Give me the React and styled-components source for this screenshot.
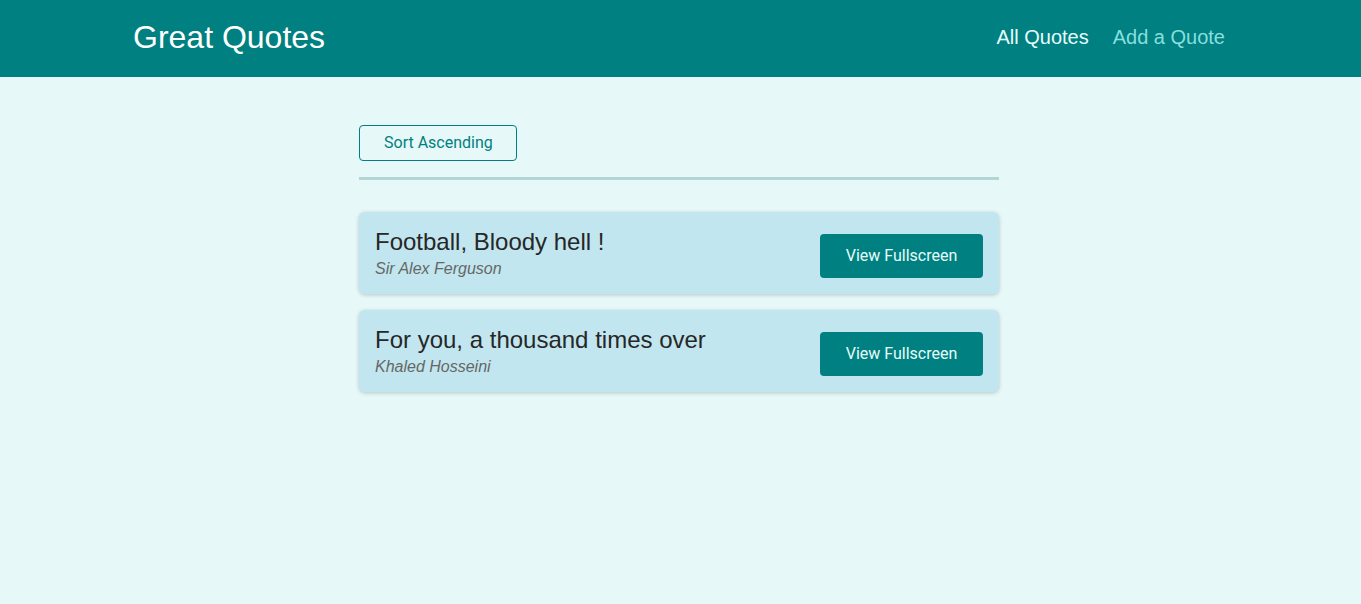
import React from "react";
import styled, { createGlobalStyle } from "styled-components";

const Global = createGlobalStyle`
  * { box-sizing: border-box; }
  html, body { margin: 0; padding: 0; }
  body {
    font-family: "Liberation Sans", Arial, sans-serif;
    background: #e6f8f8;
    min-height: 604px;
  }
`;

const Header = styled.header`
  height: 77px;
  background: #008080;
  display: flex;
  align-items: center;
  justify-content: space-between;
  padding: 0 136px 2px 133px;
`;

const Logo = styled.div`
  color: #ffffff;
  font-size: 32px;
`;

const Nav = styled.nav`
  display: flex;
  gap: 24px;
`;

const NavLink = styled.a`
  font-size: 20px;
  text-decoration: none;
  color: ${(p) => (p.$active ? "#e6fcfc" : "#88dfdf")};
  cursor: pointer;
`;

const Main = styled.main`
  width: 640px;
  margin: 48px 0 0 calc(50% - 321.5px);
`;

const Sorting = styled.div`
  padding-bottom: 16px;
  border-bottom: 3px solid #b3d5d5;
  margin-bottom: 32px;
`;

const OutlineButton = styled.button`
  font-family: Roboto, "Liberation Sans", sans-serif;
  font-size: 16px;
  height: 36px;
  padding: 0 23px 2px 24px;
  background: transparent;
  color: #008080;
  border: 1px solid #008080;
  border-radius: 4px;
  cursor: pointer;
`;

const List = styled.ul`
  list-style: none;
  margin: 0;
  padding: 0;
  display: flex;
  flex-direction: column;
  gap: 16px;
`;

const Card = styled.li`
  display: flex;
  align-items: flex-end;
  justify-content: space-between;
  padding: 16px;
  background: #c1e6ef;
  border-radius: 6px;
  box-shadow: 0 1px 4px rgba(0, 0, 0, 0.2);
`;

const Figure = styled.figure`
  margin: 0;
`;

const Quote = styled.blockquote`
  margin: 0;
  font-size: 24px;
  line-height: 28px;
  color: #272727;
`;

const Author = styled.figcaption`
  margin-top: 3px;
  font-style: italic;
  font-size: 16px;
  line-height: 19px;
  color: #666666;
`;

const SolidButton = styled.button`
  font-family: Roboto, "Liberation Sans", sans-serif;
  font-size: 16px;
  height: 44px;
  width: 163px;
  padding: 0 0 2px;
  background: #008080;
  color: #e6fcfc;
  border: none;
  border-radius: 4px;
  cursor: pointer;
`;

const quotes = [
  { text: "Football, Bloody hell !", author: "Sir Alex Ferguson" },
  { text: "For you, a thousand times over", author: "Khaled Hosseini" },
];

export default function App() {
  return (
    <>
      <Global />
      <Header>
        <Logo>Great Quotes</Logo>
        <Nav>
          <NavLink $active>All Quotes</NavLink>
          <NavLink>Add a Quote</NavLink>
        </Nav>
      </Header>
      <Main>
        <Sorting>
          <OutlineButton>Sort Ascending</OutlineButton>
        </Sorting>
        <List>
          {quotes.map((q) => (
            <Card key={q.text}>
              <Figure>
                <Quote>{q.text}</Quote>
                <Author>{q.author}</Author>
              </Figure>
              <SolidButton>View Fullscreen</SolidButton>
            </Card>
          ))}
        </List>
      </Main>
    </>
  );
}
